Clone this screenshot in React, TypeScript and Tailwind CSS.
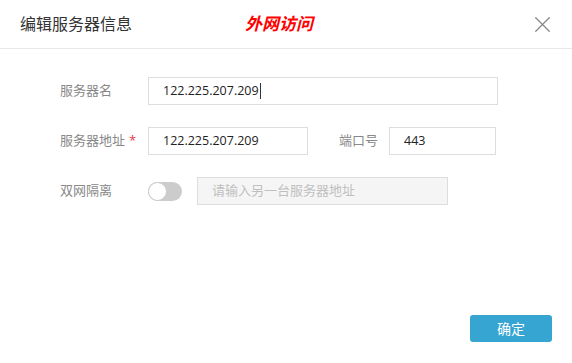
import { X } from 'lucide-react';

const font = { fontFamily: '"Open Sans", "Noto Sans CJK SC", sans-serif' };

function Label({ children, star }: { children: string; star?: boolean }) {
  return (
    <div className="w-[88px] shrink-0 text-[13px] text-[#888]">
      {children}
      {star ? <span className="ml-[4px] text-[#e4393c]">*</span> : null}
    </div>
  );
}

export default function App() {
  return (
    <div className="flex h-[363px] w-[572px] flex-col bg-white" style={font}>
      <div className="flex h-[49px] shrink-0 items-center border-b border-[#e8e8e8] pl-[20px] pr-[16px]">
        <span className="text-[16px] text-[#333]">编辑服务器信息</span>
        <span className="ml-[113px] text-[17px] font-bold italic text-[#ff0000]">外网访问</span>
        <X className="ml-auto h-[27px] w-[27px] text-[#888]" strokeWidth={1.1} />
      </div>

      <div className="flex flex-col gap-[22px] pl-[60px] pt-[28px]">
        <div className="flex items-center">
          <Label>服务器名</Label>
          <div className="flex h-[28px] w-[350px] items-center border border-[#ddd] px-[14px] text-[12.5px] text-[#222]">
            122.225.207.209
            <span className="ml-px h-[16px] w-px bg-[#333]" />
          </div>
        </div>

        <div className="flex items-center">
          <Label star>服务器地址</Label>
          <div className="flex h-[28px] w-[160px] items-center border border-[#ddd] px-[14px] text-[12.5px] text-[#222]">
            122.225.207.209
          </div>
          <div className="ml-[31px] w-[50px] text-[13px] text-[#888]">端口号</div>
          <div className="flex h-[28px] w-[107px] items-center border border-[#ddd] px-[14px] text-[12.5px] text-[#222]">
            443
          </div>
        </div>

        <div className="flex items-center">
          <Label>双网隔离</Label>
          <div className="relative h-[19px] w-[34px] rounded-full bg-[#ccc]">
            <div className="absolute left-0 top-0 h-[19px] w-[19px] rounded-full border border-[#ccc] bg-white" />
          </div>
          <div className="ml-[15px] flex h-[28px] w-[251px] items-center border border-[#ddd] bg-[#f5f5f5] px-[14px] text-[13px] text-[#c0c0c0]">
            请输入另一台服务器地址
          </div>
        </div>
      </div>

      <div className="mt-auto flex justify-end pb-[21px] pr-[20px]">
        <button className="h-[27px] w-[82px] rounded-[3px] bg-[#36a5d2] text-[14px] text-white">确定</button>
      </div>
    </div>
  );
}
